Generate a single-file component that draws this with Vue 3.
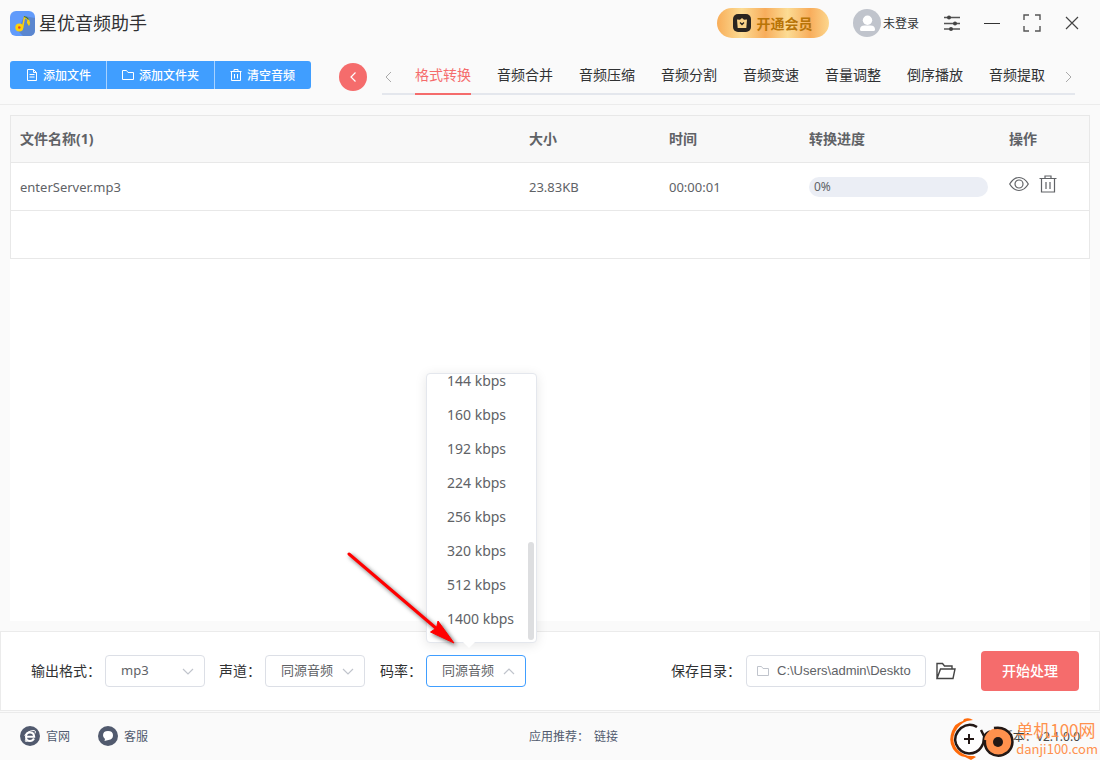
<script setup>
import { ref } from 'vue'

const tabs = ['格式转换', '音频合并', '音频压缩', '音频分割', '音频变速', '音量调整', '倒序播放', '音频提取']
const activeTab = ref('格式转换')
const files = ref([{ name: 'enterServer.mp3', size: '23.83KB', time: '00:00:01', progress: 0 }])
const rates = ['144 kbps', '160 kbps', '192 kbps', '224 kbps', '256 kbps', '320 kbps', '512 kbps', '1400 kbps']
const path = ref('C:\\Users\\admin\\Deskto')
</script>

<template>
  <div class="app">
    <header class="top">
      <div class="titlebar">
        <svg class="logo" viewBox="0 0 25 25">
          <rect width="25" height="25" rx="6" fill="#619bfb" />
          <path d="M14 5l11 2v12q0 6-6 6h-6l-5-5z" fill="#5a86cf" />
          <circle cx="9.300" cy="16.500" r="4" fill="#fdd20a" />
          <circle cx="9.300" cy="16.500" r="1.300" fill="#e8452c" />
          <path d="M12.600 16.500L14.500 6q4 1.500 5 6.500" fill="none" stroke="#fdd20a" stroke-width="1.500" />
          <path d="M14 5.500q3 .5 4.500 3" fill="none" stroke="#2f6d4f" stroke-width="1.200" />
          <path d="M17 9l3 4-1 2-2-3z" fill="#fdd20a" />
        </svg>
        <h1>星优音频助手</h1>
        <button class="vip">
          <svg width="18" height="18" viewBox="0 0 18 18">
            <rect width="18" height="18" rx="5" fill="#2a2520" />
            <path d="M4 5.500l3 .3L9 4l2 1.800 3-.3-.7 8.500H4.700z" fill="#fbd48a" />
            <path d="M7 8.500l2 2 2-2" fill="none" stroke="#2a2520" stroke-width="1.300" />
          </svg>
          开通会员
        </button>
        <button class="user">
          <svg width="28" height="28" viewBox="0 0 28 28">
            <circle cx="14" cy="14" r="14" fill="#c0c4cc" />
            <circle cx="14.500" cy="11.300" r="4.700" fill="#fff" />
            <path d="M7 20.500q0-4 4.500-4h6q4.500 0 4.500 4 0 1.500-1.500 1.500h-12Q7 22 7 20.500z" fill="#fff" />
          </svg>
          未登录
        </button>
        <div class="window-tools">
          <button aria-label="设置">
            <svg width="16" height="16" viewBox="0 0 16 16" fill="none" stroke="#555" stroke-width="1.400">
              <path d="M0 2.500h16M0 8.500h16M0 14h16" />
              <g fill="#444" stroke="none"><circle cx="5" cy="2.500" r="2" /><circle cx="11" cy="8.500" r="2" /><circle cx="7" cy="14" r="2" /></g>
            </svg>
          </button>
          <button aria-label="最小化">
            <svg width="16" height="16" viewBox="0 0 16 16"><path d="M0 8.500h16" stroke="#333" /></svg>
          </button>
          <button aria-label="最大化">
            <svg width="18" height="18" viewBox="0 0 18 18" fill="none" stroke="#555" stroke-width="1.400">
              <path d="M1 6V1h5M12 1h5v5M17 12v5h-5M6 17H1v-5" />
            </svg>
          </button>
          <button aria-label="关闭">
            <svg width="14" height="14" viewBox="0 0 14 14"><path d="M1 1l12 12M13 1L1 13" stroke="#444" stroke-width="1.200" /></svg>
          </button>
        </div>
      </div>
      <div class="toolbar">
        <div class="actions">
          <button>
            <svg width="12" height="12" viewBox="0 0 12 12" fill="none" stroke="#fff"><path d="M1.500.5h6l3 3v8h-9zM7.500.5v3h3M3.500 5.500h5M3.500 8h5" /></svg>
            添加文件
          </button>
          <button>
            <svg width="12" height="12" viewBox="0 0 12 12" fill="none" stroke="#fff"><path d="M.5 1.500h4l1.500 2h5.500v7H.5z" /></svg>
            添加文件夹
          </button>
          <button>
            <svg width="12" height="12" viewBox="0 0 12 12" fill="none" stroke="#fff"><path d="M.5 2.500h11M4 2.500v-2h4v2M1.500 2.500v9h9v-9M4.500 5v4.500M7.500 5v4.500" /></svg>
            清空音频
          </button>
        </div>
        <button class="back" aria-label="返回">
          <svg width="8" height="12" viewBox="0 0 8 12"><path d="M6.500 1.500L2 6l4.500 4.500" fill="none" stroke="#fff" stroke-width="1.200" /></svg>
        </button>
        <nav class="tabs">
          <button class="scroll" aria-label="上一组">
            <svg width="7" height="12" viewBox="0 0 7 12"><path d="M6 1L1 6l5 5" fill="none" stroke="#aaa" /></svg>
          </button>
          <div class="tab-list">
            <button v-for="t in tabs" :key="t" class="tab" :class="{ active: t === activeTab }" @click="activeTab = t">{{ t }}</button>
          </div>
          <button class="scroll" aria-label="下一组">
            <svg width="7" height="12" viewBox="0 0 7 12"><path d="M1 1l5 5-5 5" fill="none" stroke="#aaa" /></svg>
          </button>
        </nav>
      </div>
    </header>

    <main>
      <table>
        <colgroup><col /><col class="c-mid" /><col class="c-mid" /><col class="c-progress" /><col class="c-ops" /></colgroup>
        <thead>
          <tr><th>文件名称(1)</th><th>大小</th><th>时间</th><th>转换进度</th><th>操作</th></tr>
        </thead>
        <tbody>
          <tr v-for="f in files" :key="f.name">
            <td>{{ f.name }}</td>
            <td>{{ f.size }}</td>
            <td>{{ f.time }}</td>
            <td>
              <div class="progress"><div class="bar" :style="{ width: f.progress + '%' }"></div><span>{{ f.progress }}%</span></div>
            </td>
            <td>
              <div class="ops">
                <button aria-label="查看">
                  <svg width="20" height="18" viewBox="0 0 20 18" fill="none" stroke="#606266" stroke-width="1.200"><path d="M.7 9Q4.500 2.500 10 2.500T19.300 9Q15.500 15.500 10 15.500T.7 9z" /><circle cx="10" cy="9" r="4" /></svg>
                </button>
                <button aria-label="删除">
                  <svg width="18" height="18" viewBox="0 0 18 18" fill="none" stroke="#606266" stroke-width="1.200"><path d="M.5 3.500h17M6 3.500v-2.500h6v2.500M2.500 3.500v13.500h13V3.500M7 7v7M11 7v7" /></svg>
                </button>
              </div>
            </td>
          </tr>
          <tr class="blank"><td colspan="5"></td></tr>
        </tbody>
      </table>
    </main>

    <section class="settings">
      <label class="fmt-label" for="fmt">输出格式：</label>
      <div class="field">
        <select id="fmt"><option>mp3</option></select>
        <svg class="chev" width="12" height="7" viewBox="0 0 12 7"><path d="M1 1l5 5 5-5" /></svg>
      </div>
      <label for="channel">声道：</label>
      <div class="field">
        <select id="channel"><option>同源音频</option></select>
        <svg class="chev" width="12" height="7" viewBox="0 0 12 7"><path d="M1 1l5 5 5-5" /></svg>
      </div>
      <label for="rate">码率：</label>
      <div class="field open">
        <select id="rate"><option>同源音频</option></select>
        <svg class="chev" width="12" height="7" viewBox="0 0 12 7"><path d="M1 6l5-5 5 5" /></svg>
        <div class="popup">
          <ul><li v-for="r in rates" :key="r"><button>{{ r }}</button></li></ul>
          <div class="thumb"></div>
        </div>
        <svg class="pointer" width="116" height="100" viewBox="0 0 116 100">
          <path d="M5 5L93 80" stroke="#f00" stroke-width="3" stroke-linecap="round" />
          <path d="M110 94L94 72l-1.500 7-6 4z" fill="#f00" stroke="#f00" />
        </svg>
      </div>
      <div class="save">
        <label for="dir">保存目录：</label>
        <div class="path">
          <svg width="12" height="12" viewBox="0 0 12 12" fill="none" stroke="#c0c4cc"><path d="M.5 1.500h4l1.500 2h5.500v7H.5z" /></svg>
          <input id="dir" v-model="path" type="text" />
        </div>
        <button class="browse" aria-label="打开目录">
          <svg width="20" height="18" viewBox="0 0 20 18" fill="none" stroke="#444" stroke-width="1.400"><path d="M1 16.500V1.500h5.500l2 2.500H16v3M1 16.500L4.500 7H19l-2 9.500z" /></svg>
        </button>
        <button class="start">开始处理</button>
      </div>
    </section>

    <footer>
      <a href="#">
        <svg width="20" height="20" viewBox="0 0 20 20"><circle cx="10" cy="10" r="10" fill="#515a6e" /><path d="M14 12.500q-1.300 2.500-4 2.500-4 0-4-4.300Q6 6.500 10 6.500t4.200 4.300H7" fill="none" stroke="#fff" stroke-width="2" /><path d="M6 13q-2 3.500 1.500 2M4.500 9.500Q8 4.500 14 4.500q2.500.3 1 3" fill="none" stroke="#fff" /></svg>
        官网
      </a>
      <a href="#">
        <svg width="20" height="20" viewBox="0 0 20 20"><circle cx="10" cy="10" r="10" fill="#515a6e" /><path d="M10 5q5 0 5 4.300T10.500 14L6.500 15l.5-2q-2-1.300-2-3.700Q5 5 10 5z" fill="#fff" /></svg>
        客服
      </a>
      <div class="recommend"><span>应用推荐：</span><a href="#">链接</a></div>
      <span class="version">版本：v2.1.0.0</span>
      <div class="mark">
        <svg width="64" height="42" viewBox="0 0 64 42" fill="none">
          <path d="M23 2Q19-1 14 1L13 3Q5 5 2 13-2 23 3 31q5 7 12 8l6 3 5-3-2-1q-10 1-17-7-6-8-2-17 4-8 12-11z" fill="#ff6a0a" />
          <circle cx="19" cy="21" r="14" fill="#fff" />
          <path d="M27 9Q19 4 11 10 3 17 6 26q4 9 13 9.500 8 0 12-6 3-4 3-10 1-4 6-6M31 12l4 8" stroke="#231815" stroke-width="2.500" />
          <path d="M19 16v10M14 21h10" stroke="#231815" stroke-width="2" />
          <circle cx="48" cy="24" r="14" fill="#ff914d" />
          <path d="M44 10Q55 8 61 17q4 10-3 17-9 7-18 1-6-5-5-13" stroke="#231815" stroke-width="2.500" />
          <circle cx="48" cy="24" r="5" fill="#231815" />
        </svg>
        <div class="mark-text"><span>单机100网</span><small>danji100.com</small></div>
      </div>
    </footer>
  </div>
</template>

<style>
body { margin: 0; background: #fafafa; }
</style>

<style scoped>
* { box-sizing: border-box; }
.app {
  min-height: 100vh;
  display: flex;
  flex-direction: column;
  background: #fafafa;
  color: #303133;
  font-family: "Noto Sans", "Noto Sans CJK SC", sans-serif;
  font-size: 14px;
  overflow: hidden;
}
button { font: inherit; color: inherit; border: 0; background: none; padding: 0; cursor: pointer; white-space: nowrap; }
svg { display: block; flex: none; }
a { color: inherit; text-decoration: none; }
.top { height: 105px; border-bottom: 1px solid #ececec; }
.titlebar { height: 46px; display: flex; align-items: center; padding: 0 8px 0 10px; }
.logo { width: 25px; height: 25px; }
h1 { flex: 1; margin: 0 0 0 4px; font-size: 18px; line-height: 24px; font-weight: 400; }
.vip {
  width: 112px; height: 30px; margin-right: 24px; border-radius: 15px;
  display: flex; align-items: center; justify-content: center; gap: 5px;
  font-weight: 700; color: #b87407;
  background: linear-gradient(90deg, #f8ad58, #fcdc94 22%, #f8ad5c 43%, #fcdc94 63%, #f8ad5c 83%, #fcd68c);
}
.user { display: flex; align-items: center; gap: 2px; font-size: 12px; margin-right: 13px; }
.window-tools { display: flex; }
.window-tools button { width: 40px; height: 40px; display: grid; place-items: center; }
.toolbar { display: flex; align-items: flex-start; padding: 15px 25px 0 10px; }
.actions { flex: none; display: flex; border-radius: 3px; overflow: hidden; background: #409eff; color: #fff; font-size: 12px; font-weight: 500; }
.actions button { flex: none; height: 28px; padding: 0 15px 0 16px; display: flex; align-items: center; gap: 5px; }
.actions button + button { border-left: 1px solid #a8d2ff; padding-left: 15px; }
.actions button:last-child { padding-right: 16px; }
.back { flex: none; width: 28px; height: 28px; margin: 2px 15px 0 28px; border-radius: 50%; background: #f56c6c; display: grid; place-items: center; }
.tabs { flex: 1; min-width: 0; height: 34px; display: flex; border-bottom: 2px solid #e4e7ed; }
.scroll { width: 13px; height: 32px; display: grid; place-items: center; }
.tab-list { flex: 1; min-width: 0; height: 34px; display: flex; gap: 26px; padding: 0 20px; overflow: hidden; }
.tab { flex: none; height: 34px; padding-bottom: 6px; border-bottom: 2px solid transparent; }
.tab.active { color: #f56c6c; border-color: #f56c6c; }
main { flex: 1; margin: 10px 10px; background: #fff; }
table { width: 100%; table-layout: fixed; border-collapse: separate; border-spacing: 0; border: 1px solid #e8e8e8; border-bottom: 0; color: #606266; font-size: 13px; }
.c-mid { width: 140px; }
.c-progress { width: 200px; }
.c-ops { width: 89px; }
th, td { height: 48px; padding: 0 12px 0 9px; text-align: left; border-bottom: 1px solid #e8e8e8; }
th { height: 47px; padding-bottom: 2px; background: #f8f8f8; font-size: 14px; font-weight: 700; }
.progress { display: flex; align-items: center; height: 20px; border-radius: 10px; background: #ebeef5; font-size: 12px; overflow: hidden; }
.progress span { padding-left: 5px; }
.bar { height: 20px; background: #409eff; }
.ops { display: flex; gap: 10px; padding-bottom: 5px; }
.settings { height: 80px; display: flex; align-items: center; padding: 0 20px 0 30px; background: #fff; border: 1px solid #ebebeb; }
.settings label { flex: none; width: 46px; white-space: nowrap; padding-bottom: 3px; }
.settings .fmt-label { width: 74px; }
.settings .fmt-label + .field { margin-right: 14px; }
.field { position: relative; flex: none; width: 100px; height: 32px; margin-right: 15px; }
select {
  appearance: none; width: 100%; height: 100%; padding: 0 15px 2px; border: 1px solid #dcdfe6; border-radius: 4px;
  background: #fff; color: #606266; font-family: inherit; font-size: 13px; outline: 0;
}
.open select { border-color: #409eff; }
.chev { position: absolute; right: 11px; top: 13px; fill: none; stroke: #c0c4cc; stroke-width: 1.2; pointer-events: none; }
.popup {
  position: absolute; left: 0; bottom: 44px; width: 111px; height: 270px;
  border: 1px solid #e4e7ed; border-radius: 4px; background: #fff; box-shadow: 0 2px 12px rgba(0, 0, 0, .1);
}
.popup::after { content: ""; position: absolute; left: 36px; bottom: -6px; border: 6px solid transparent; border-bottom: 0; border-top-color: #fff; }
.popup ul { height: 100%; margin: 0; padding: 0 0 7px; list-style: none; display: flex; flex-direction: column; justify-content: flex-end; overflow: hidden; }
.popup li { flex: none; height: 34px; }
.popup li button { width: 100%; height: 34px; padding-left: 20px; text-align: left; color: #606266; }
.thumb { position: absolute; right: 2px; bottom: 2px; width: 6px; height: 98px; border-radius: 3px; background: #dddee0; }
.pointer { position: absolute; right: 66px; bottom: 38px; fill: none; filter: drop-shadow(2px 2px 2px rgba(0, 0, 0, .6)); pointer-events: none; }
.save { margin-left: auto; display: flex; align-items: center; }
.settings .save label { width: 75px; }
.path { flex: none; width: 180px; height: 32px; display: flex; align-items: center; gap: 8px; padding: 0 11px 0 10px; border: 1px solid #dcdfe6; border-radius: 4px; }
.path input { flex: 1; min-width: 0; border: 0; padding: 0 0 1px; outline: 0; background: none; color: #606266; font-family: "Liberation Sans", Arial, sans-serif; font-size: 13px; }
.browse { margin: 0 25px 0 10px; }
.start { flex: none; width: 98px; height: 40px; padding-bottom: 2px; border-radius: 4px; background: #f56c6c; color: #fff; font-weight: 500; }
footer { position: relative; height: 48px; margin-top: 1px; padding: 0 20px 2px; border-top: 1px solid #ebebeb; display: flex; align-items: center; font-size: 12px; color: #515a6e; }
footer > a { display: flex; align-items: center; gap: 6px; margin-right: 28px; }
.recommend { position: absolute; left: 529px; display: flex; gap: 5px; }
.version { margin-left: auto; font-size: 12px; color: #444; }
.mark { position: absolute; right: 2px; top: 5px; display: flex; align-items: center; gap: 2px; color: #ff914d; font-family: "Noto Sans CJK SC", sans-serif; pointer-events: none; }
.mark-text { display: flex; flex-direction: column; white-space: nowrap; }
.mark-text span { font-size: 17px; line-height: 20px; }
.mark-text small { font-size: 13px; line-height: 18px; }
</style>
